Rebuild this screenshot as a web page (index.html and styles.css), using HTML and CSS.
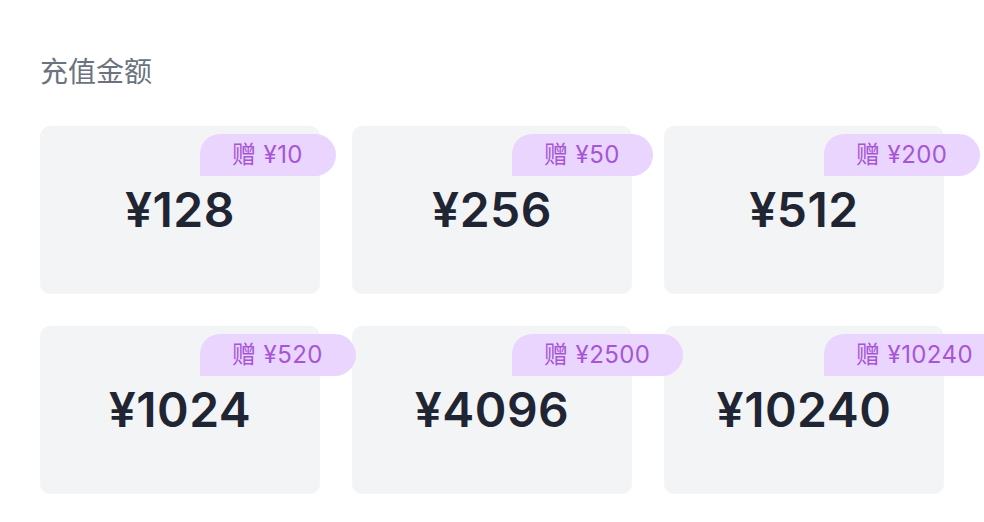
FILE: index.html
```html
<!DOCTYPE html>
<html lang="zh">
<head>
<meta charset="utf-8">
<link rel="stylesheet" href="styles.css">
</head>
<body>
<div class="page">
  <h2 class="title">充值金额</h2>
  <div class="grid">
    <div class="card"><span class="badge">赠 ¥10</span><span class="amount">¥128</span></div>
    <div class="card"><span class="badge">赠 ¥50</span><span class="amount">¥256</span></div>
    <div class="card"><span class="badge">赠 ¥200</span><span class="amount">¥512</span></div>
    <div class="card"><span class="badge">赠 ¥520</span><span class="amount">¥1024</span></div>
    <div class="card"><span class="badge">赠 ¥2500</span><span class="amount">¥4096</span></div>
    <div class="card"><span class="badge">赠 ¥10240</span><span class="amount">¥10240</span></div>
  </div>
</div>
</body>
</html>
```
FILE: styles.css
```css
html, body {
  margin: 0;
  padding: 0;
  background: #ffffff;
  overflow: hidden;
}
.page {
  padding: 52px 40px 0 40px;
  font-family: Inter, "Noto Sans CJK SC", sans-serif;
}
.title {
  margin: 0 0 34px 0;
  font-size: 28px;
  line-height: 40px;
  font-weight: 400;
  color: #6b7280;
}
.grid {
  display: grid;
  grid-template-columns: repeat(3, 280px);
  column-gap: 32px;
  row-gap: 32px;
}
.card {
  position: relative;
  height: 168px;
  background: #f3f4f6;
  border-radius: 10px;
  display: flex;
  align-items: center;
  justify-content: center;
}
.amount {
  font-size: 48px;
  font-weight: 600;
  color: #1f2533;
  line-height: 1;
  letter-spacing: 0.5px;
}
.badge {
  position: absolute;
  z-index: 2;
  top: 8px;
  left: 160px;
  height: 42px;
  line-height: 42px;
  padding: 0 33px 0 32px;
  background: #e9d5ff;
  color: #a855d4;
  font-size: 24px;
  letter-spacing: 0.4px;
  border-radius: 20px 21px 21px 0;
  white-space: nowrap;
}
```
